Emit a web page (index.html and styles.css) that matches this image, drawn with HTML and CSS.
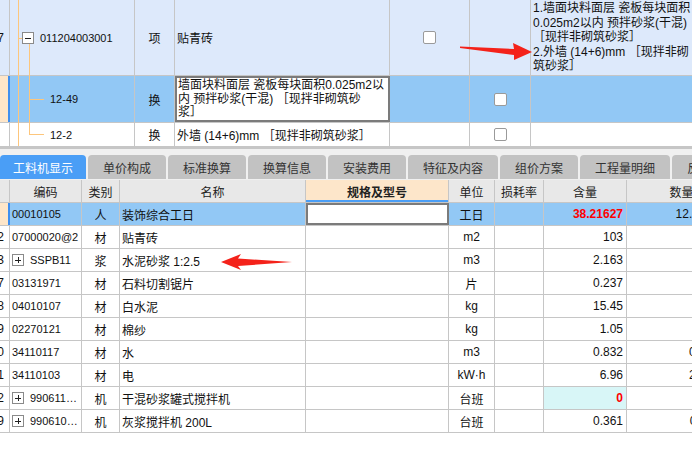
FILE: index.html
```html
<!DOCTYPE html>
<html>
<head>
    <title>工料机显示</title>
    <link rel="stylesheet" href="styles.css">
</head>
<body>
    <div class="page">
        <div class="item-grid">
            <div class="item-row item-main">
                <div class="cell strip"><span class="row-no">7</span></div>
                <div class="cell tree tree-top">
                    <svg class="fold" width="12" height="12"><rect x="0.5" y="0.5" width="11" height="11" fill="#fff" stroke="#8a8a8a"/><path d="M3 6.5h6" stroke="#222"/></svg>
                    <span class="num">011204003001</span>
                </div>
                <div class="cell center">项</div>
                <div class="cell">贴青砖</div>
                <div class="cell center"><span class="check"></span></div>
                <div class="cell"></div>
                <div class="cell desc">1.墙面块料面层 瓷板每块面积<br>0.025m2以内 预拌砂浆(干混)<br>［现拌非砌筑砂浆］<br>2.外墙 (14+6)mm ［现拌非砌<br>筑砂浆］</div>
            </div>
            <div class="item-row item-current">
                <div class="cell strip current"></div>
                <div class="cell tree"><span class="num">12-49</span></div>
                <div class="cell center">换</div>
                <div class="cell edit-box">墙面块料面层 瓷板每块面积0.025m2以<br>内 预拌砂浆(干混) ［现拌非砌筑砂<br>浆］</div>
                <div class="cell"></div>
                <div class="cell center"><span class="check"></span></div>
                <div class="cell"></div>
            </div>
            <div class="item-row item-sub">
                <div class="cell strip"></div>
                <div class="cell tree"><span class="num">12-2</span></div>
                <div class="cell center">换</div>
                <div class="cell">外墙 (14+6)mm ［现拌非砌筑砂浆］</div>
                <div class="cell"></div>
                <div class="cell center"><span class="check"></span></div>
                <div class="cell"></div>
            </div>
            <svg class="tree-lines" width="692" height="146">
                <g stroke="#fdc67c" stroke-width="1" fill="none">
                    <path d="M18.5 0V146"/>
                    <path d="M18 38.5H22"/>
                    <path d="M29.5 44V134.5"/>
                    <path d="M29 99.5H44"/>
                    <path d="M29 134.5H44"/>
                </g>
            </svg>
        </div>

        <div class="tab-bar">
            <div class="tab active">工料机显示</div>
            <div class="tab">单价构成</div>
            <div class="tab">标准换算</div>
            <div class="tab">换算信息</div>
            <div class="tab">安装费用</div>
            <div class="tab">特征及内容</div>
            <div class="tab">组价方案</div>
            <div class="tab">工程量明细</div>
            <div class="tab">反查图形工程量</div>
        </div>

        <div class="res-grid">
            <div class="res-row res-head">
                <div class="cell strip"></div>
                <div class="cell center">编码</div>
                <div class="cell center">类别</div>
                <div class="cell center">名称</div>
                <div class="cell center spec-head">规格及型号</div>
                <div class="cell center">单位</div>
                <div class="cell center">损耗率</div>
                <div class="cell center">含量</div>
                <div class="cell center">数量</div>
            </div>
            <div class="res-row res-current">
                <div class="cell strip current"></div>
                <div class="cell num">00010105</div>
                <div class="cell center">人</div>
                <div class="cell">装饰综合工日</div>
                <div class="cell spec-edit"></div>
                <div class="cell center">工日</div>
                <div class="cell"></div>
                <div class="cell right red">38.21627</div>
                <div class="cell right qty">12.6137</div>
            </div>
            <div class="res-row">
                <div class="cell strip"><span class="row-no">2</span></div>
                <div class="cell num">07000020@2</div>
                <div class="cell center">材</div>
                <div class="cell">贴青砖</div>
                <div class="cell"></div>
                <div class="cell center">m2</div>
                <div class="cell"></div>
                <div class="cell right">103</div>
                <div class="cell right qty"></div>
            </div>
            <div class="res-row">
                <div class="cell strip"><span class="row-no">3</span></div>
                <div class="cell num">
                    <svg class="fold" width="12" height="12"><rect x="0.5" y="0.5" width="11" height="11" fill="#fff" stroke="#8a8a8a"/><path d="M3 6.5h6M6.5 3v6" stroke="#222"/></svg>
                    SSPB11
                </div>
                <div class="cell center">浆</div>
                <div class="cell">水泥砂浆 1:2.5</div>
                <div class="cell"></div>
                <div class="cell center">m3</div>
                <div class="cell"></div>
                <div class="cell right">2.163</div>
                <div class="cell right qty"></div>
            </div>
            <div class="res-row">
                <div class="cell strip"><span class="row-no">7</span></div>
                <div class="cell num">03131971</div>
                <div class="cell center">材</div>
                <div class="cell">石料切割锯片</div>
                <div class="cell"></div>
                <div class="cell center">片</div>
                <div class="cell"></div>
                <div class="cell right">0.237</div>
                <div class="cell right qty"></div>
            </div>
            <div class="res-row">
                <div class="cell strip"><span class="row-no">8</span></div>
                <div class="cell num">04010107</div>
                <div class="cell center">材</div>
                <div class="cell">白水泥</div>
                <div class="cell"></div>
                <div class="cell center">kg</div>
                <div class="cell"></div>
                <div class="cell right">15.45</div>
                <div class="cell right qty"></div>
            </div>
            <div class="res-row">
                <div class="cell strip"><span class="row-no">9</span></div>
                <div class="cell num">02270121</div>
                <div class="cell center">材</div>
                <div class="cell">棉纱</div>
                <div class="cell"></div>
                <div class="cell center">kg</div>
                <div class="cell"></div>
                <div class="cell right">1.05</div>
                <div class="cell right qty"></div>
            </div>
            <div class="res-row">
                <div class="cell strip"><span class="row-no">10</span></div>
                <div class="cell num">34110117</div>
                <div class="cell center">材</div>
                <div class="cell">水</div>
                <div class="cell"></div>
                <div class="cell center">m3</div>
                <div class="cell"></div>
                <div class="cell right">0.832</div>
                <div class="cell right qty">0.275</div>
            </div>
            <div class="res-row">
                <div class="cell strip"><span class="row-no">11</span></div>
                <div class="cell num">34110103</div>
                <div class="cell center">材</div>
                <div class="cell">电</div>
                <div class="cell"></div>
                <div class="cell center">kW·h</div>
                <div class="cell"></div>
                <div class="cell right">6.96</div>
                <div class="cell right qty">2.297</div>
            </div>
            <div class="res-row">
                <div class="cell strip"><span class="row-no">12</span></div>
                <div class="cell num">
                    <svg class="fold" width="12" height="12"><rect x="0.5" y="0.5" width="11" height="11" fill="#fff" stroke="#8a8a8a"/><path d="M3 6.5h6M6.5 3v6" stroke="#222"/></svg>
                    990611…
                </div>
                <div class="cell center">机</div>
                <div class="cell">干混砂浆罐式搅拌机</div>
                <div class="cell"></div>
                <div class="cell center">台班</div>
                <div class="cell"></div>
                <div class="cell right red cyan">0</div>
                <div class="cell right qty"></div>
            </div>
            <div class="res-row">
                <div class="cell strip"><span class="row-no">19</span></div>
                <div class="cell num">
                    <svg class="fold" width="12" height="12"><rect x="0.5" y="0.5" width="11" height="11" fill="#fff" stroke="#8a8a8a"/><path d="M3 6.5h6M6.5 3v6" stroke="#222"/></svg>
                    990610…
                </div>
                <div class="cell center">机</div>
                <div class="cell">灰浆搅拌机 200L</div>
                <div class="cell"></div>
                <div class="cell center">台班</div>
                <div class="cell"></div>
                <div class="cell right">0.361</div>
                <div class="cell right qty">0.119</div>
            </div>
        </div>
    </div>

    <!-- red annotation arrows drawn over the grids -->
    <svg class="marks" width="692" height="456">
        <polygon points="460,46.5 514,49 513,43 532,52 514,60 514,55 460,48" fill="#f4221a"/>
        <polygon points="221,262 241,254 238,258.5 292,262 238,266 241,270" fill="#f4221a"/>
    </svg>
</body>
</html>
```

FILE: styles.css
```css
* {
    box-sizing: border-box;
}

html, body {
    margin: 0;
    overflow: hidden;
}

body {
    position: relative;
    width: 692px;
    height: 456px;
    font-family: "Liberation Sans", "Noto Sans CJK SC", sans-serif;
    font-size: 12px;
    color: #111;
    background: #fff;
}

.page {
    width: 760px;
}

/* top grid: list items */
.item-grid {
    position: relative;
}

.item-row {
    display: grid;
    grid-template-columns: 10px 125px 40px 215px 80px 61px 229px;
    border-bottom: 1px solid #c6c6c6;
}

.item-main {
    height: 76px;
    background: #dde9fb;
}

.item-current {
    height: 47px;
    background: #92c8f5;
}

.item-sub {
    height: 23px;
    border-bottom: none;
}

.cell {
    display: flex;
    align-items: center;
    padding: 0 2px;
    border-right: 1px solid #c6c6c6;
    white-space: nowrap;
    overflow: hidden;
}

.center {
    justify-content: center;
}

.right {
    justify-content: flex-end;
    padding-right: 3px;
}

.num {
    font-size: 11px;
}

.strip {
    justify-content: flex-end;
    padding: 0 5px 0 0;
    overflow: hidden;
}

.strip.current {
    background: #fee6c9;
    border-right: 2px solid #3f8fef;
}

.row-no {
    font-size: 12px;
}

.tree {
    padding-left: 40px;
}

.tree-top {
    padding-left: 12px;
    gap: 6px;
}

.fold {
    flex: none;
}

.check {
    width: 13px;
    height: 13px;
    border: 1px solid #9a9a9a;
    border-radius: 2px;
    background: #fff;
}

.desc {
    line-height: 14.5px;
    padding-left: 2px;
}

.edit-box {
    align-items: flex-start;
    padding: 1px 1px;
    line-height: 13.5px;
    background: #fff;
    border: 2px solid #7b7b7b;
}

.tree-lines {
    position: absolute;
    top: 0;
    left: 0;
    pointer-events: none;
}

/* tabs */
.tab-bar {
    display: flex;
    gap: 2px;
    height: 34px;
    padding: 6px 0 1px;
    background: #f0f0f0;
    border-top: 3px solid #c6c6c6;
}

.tab {
    flex: none;
    display: flex;
    align-items: center;
    height: 24px;
    padding: 0 15px;
    background: #c2c2c2;
    border-radius: 4px 4px 0 0;
    color: #333;
}

.tab.active {
    padding: 0 13px;
    background: #4a9ef6;
    color: #fff;
}

/* bottom grid: resources */
.res-row {
    display: grid;
    grid-template-columns: 10px 72px 38px 186px 143px 46px 49px 83px 110px;
    height: 23px;
    border-bottom: 1px solid #c6c6c6;
}

.res-row .num {
    gap: 6px;
}

.res-head {
    background: #e8e8e8;
    color: #222;
}

.spec-head {
    background: #fde6ca;
    font-weight: bold;
    box-shadow: inset 0 -2px 0 #4a9ef6;
}

.res-current {
    background: #92c8f5;
}

.spec-edit {
    background: #fff;
    border: 2px solid #7b7b7b;
}

.red {
    color: #f00;
    font-weight: bold;
}

.cyan {
    background: #d8f6f7;
}

.qty {
    padding-right: 17px;
}

.marks {
    position: absolute;
    top: 0;
    left: 0;
    pointer-events: none;
}
```
